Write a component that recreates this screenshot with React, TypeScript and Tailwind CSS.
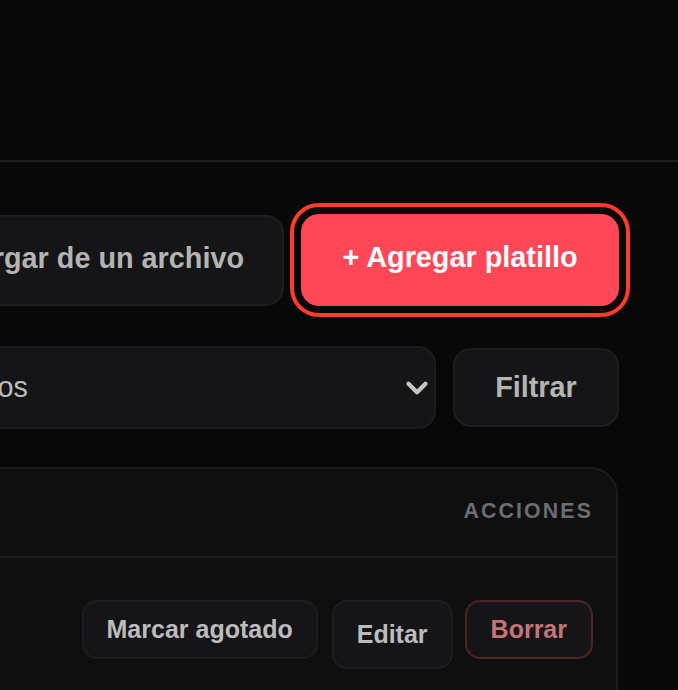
import React from 'react';
import { ChevronDown } from 'lucide-react';

const actionBtn =
  'shrink-0 whitespace-nowrap rounded-[15px] border-2 bg-[#151517] px-[23px] text-[25px] font-bold';

export default function App() {
  return (
    <div className="min-h-screen overflow-hidden bg-[#080808] font-['Liberation_Sans',Arial,sans-serif]">
      {/* top bar */}
      <header className="h-[162px] border-b-2 border-[#1c1c20]" />

      <main className="ml-[-80px] w-[699px] pt-[52px]">
        {/* actions */}
        <div className="flex items-center gap-[17px]">
          <button className="flex h-[91px] flex-1 items-center justify-center whitespace-nowrap rounded-[18px] border-2 border-[#1d1d21] bg-[#151517] pl-[28px] pr-[32px] pb-[3px] text-[28.8px] font-bold text-[#b4b4b4]">
            Cargar de un archivo
          </button>
          <button className="flex h-[92px] w-[318px] shrink-0 items-center justify-center whitespace-nowrap rounded-[18px] bg-[#ff4757] pb-[4px] text-[28.8px] font-bold text-white outline-4 outline-offset-7 outline-[#ff3b30]">
            + Agregar platillo
          </button>
        </div>

        {/* filters */}
        <div className="mt-[40px] flex items-center gap-[17px]">
          <div className="flex h-[83px] flex-1 items-center justify-between rounded-[18px] border-2 border-[#1d1d21] bg-[#151517] pl-[29px] pr-0 text-[28.8px] text-[#bdbdbd]">
            <span>Todos</span>
            <ChevronDown size={34} strokeWidth={3} className="text-[#c4c4c4]" />
          </div>
          <button className="flex h-[79px] w-[166px] shrink-0 items-center justify-center rounded-[18px] border-2 border-[#1d1d21] bg-[#151517] text-[28.8px] font-bold text-[#b4b4b4]">
            Filtrar
          </button>
        </div>

        {/* table */}
        <div className="mt-[38px] mr-px h-[300px] rounded-[28px] border-2 border-[#1c1c1f] bg-[#0f0f10]">
          <div className="flex h-[89px] items-center justify-end border-b-2 border-[#1d1d20] pb-[2px] pr-[23px]">
            <span className="text-[21.3px] font-bold uppercase tracking-[0.1em] text-[#6c6c75]">
              Acciones
            </span>
          </div>
          <div className="flex items-start justify-end pr-[23px] pt-[42px]">
            <button className={`${actionBtn} h-[59px] border-[#1e1e22] text-[#bcbcbc]`}>
              Marcar agotado
            </button>
            <button className={`${actionBtn} ml-[14px] h-[69px] border-[#1e1e22] text-[#bcbcbc]`}>
              Editar
            </button>
            <button className={`${actionBtn} ml-[12px] h-[59px] px-[24px] border-[#4d2326] text-[#c47474]`}>
              Borrar
            </button>
          </div>
        </div>
      </main>
    </div>
  );
}
